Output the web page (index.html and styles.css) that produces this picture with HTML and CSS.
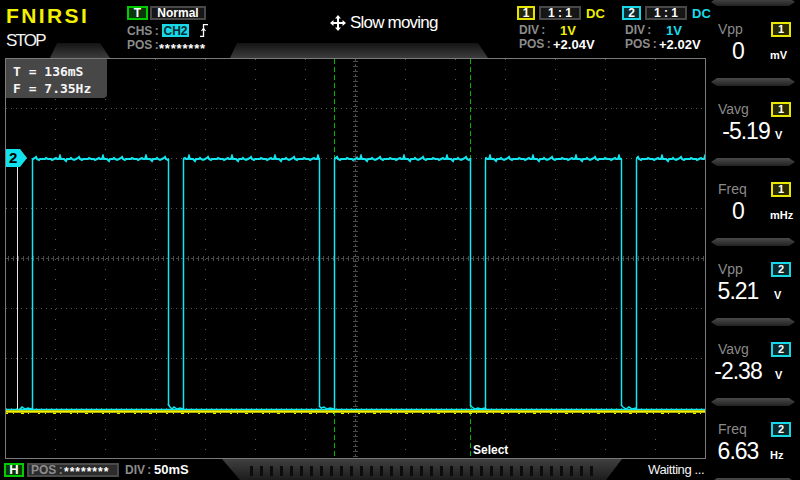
FILE: index.html
```html
<!DOCTYPE html>
<html>
<head>
<meta charset="utf-8">
<link rel="stylesheet" href="styles.css">
</head>
<body>
<div class="app">
  <div class="main">
    <header class="top">
      <div class="deco deco-a"></div>
      <div class="deco deco-b"></div>
      <div class="brand">
        <div class="logo">FNIRSI</div>
        <div class="state">STOP</div>
      </div>
      <div class="trig">
        <div class="row r1"><span class="tag tag-green">T</span><span class="box box-mode">Normal</span></div>
        <div class="row r2"><span class="lbl lbl-chs">CHS :</span><span class="chs">CH2</span>
          <svg class="edge" width="8" height="13" viewBox="0 0 8 13"><path d="M0 12.5H3.5V0.5H8" fill="none" stroke="#fff" stroke-width="1.3"/><path d="M1.5 7L3.5 4.5L5.5 7" fill="none" stroke="#fff" stroke-width="1.2"/></svg>
        </div>
        <div class="row r3"><span class="lbl lbl-pos">POS :</span><span class="stars">********</span></div>
      </div>
      <div class="mode">
        <svg class="move" width="16" height="16" viewBox="0 0 16 16"><path d="M8 1V15M1 8H15" stroke="#fff" stroke-width="2"/><path d="M8 0L11 3.5H5Z M8 16L11 12.5H5Z M0 8L3.5 5V11Z M16 8L12.5 5V11Z" fill="#fff"/></svg>
        <span>Slow moving</span>
      </div>
      <div class="ch ch1">
        <div class="row r1"><span class="tag tag-y">1</span><span class="box box-ratio">1 : 1</span><span class="dc yel">DC</span></div>
        <div class="row r2"><span class="lbl lbl-div">DIV :</span><span class="dv yel">1V</span></div>
        <div class="row r3"><span class="lbl lbl-pos2">POS :</span><span class="pv">+2.04V</span></div>
      </div>
      <div class="ch ch2">
        <div class="row r1"><span class="tag tag-c">2</span><span class="box box-ratio">1 : 1</span><span class="dc cya">DC</span></div>
        <div class="row r2"><span class="lbl lbl-div">DIV :</span><span class="dv cya">1V</span></div>
        <div class="row r3"><span class="lbl lbl-pos2">POS :</span><span class="pv">+2.02V</span></div>
      </div>
    </header>

    <div class="scope">
      <svg class="screen" width="699" height="399" viewBox="6 59 699 399">
        <defs>
          <pattern id="cnoise" patternUnits="userSpaceOnUse" x="0" y="154" width="43" height="10">
            <polyline points="0,5 2,5 3,4 5,5 8,5 9,6 11,5 13,4 14,5 16,5 17,2 18,5 21,5 22,6 23,7 24,5 27,5 28,4 29,5 31,6 33,5 35,4 36,3 37,5 39,6 40,5 43,5" fill="none" stroke="#12e6f0" stroke-width="2"/>
          </pattern>
        </defs>
        <g class="grid" stroke="#5a5a5a" stroke-width="1" stroke-dasharray="1 9">
          <line x1="55.5" y1="59" x2="55.5" y2="458"/>
          <line x1="105.5" y1="59" x2="105.5" y2="458"/>
          <line x1="155.5" y1="59" x2="155.5" y2="458"/>
          <line x1="205.5" y1="59" x2="205.5" y2="458"/>
          <line x1="255.5" y1="59" x2="255.5" y2="458"/>
          <line x1="305.5" y1="59" x2="305.5" y2="458"/>
          <line x1="405.5" y1="59" x2="405.5" y2="458"/>
          <line x1="455.5" y1="59" x2="455.5" y2="458"/>
          <line x1="505.5" y1="59" x2="505.5" y2="458"/>
          <line x1="555.5" y1="59" x2="555.5" y2="458"/>
          <line x1="605.5" y1="59" x2="605.5" y2="458"/>
          <line x1="655.5" y1="59" x2="655.5" y2="458"/>
        </g>
        <g class="grid" stroke="#5a5a5a" stroke-width="1" stroke-dasharray="1 4">
          <line x1="6" y1="108.5" x2="705" y2="108.5"/>
          <line x1="6" y1="158.5" x2="705" y2="158.5"/>
          <line x1="6" y1="208.5" x2="705" y2="208.5"/>
          <line x1="6" y1="308.5" x2="705" y2="308.5"/>
          <line x1="6" y1="358.5" x2="705" y2="358.5"/>
          <line x1="6" y1="408.5" x2="705" y2="408.5"/>
        </g>
        <g class="cross" stroke="#4a4a4a">
          <line x1="355.5" y1="59" x2="355.5" y2="458" stroke-width="1" stroke-dasharray="3 2"/>
          <line x1="355.5" y1="61" x2="355.5" y2="458" stroke-width="5" stroke-dasharray="1 4"/>
          <line x1="6" y1="258.5" x2="705" y2="258.5" stroke-width="1" stroke-dasharray="3 2"/>
          <line x1="8" y1="258.5" x2="705" y2="258.5" stroke-width="5" stroke-dasharray="1 4"/>
        </g>
        <g class="cursors" stroke="#00b400" stroke-width="1" stroke-dasharray="5 3">
          <line x1="334.5" y1="59" x2="334.5" y2="458"/>
          <line x1="470.5" y1="59" x2="470.5" y2="458"/>
        </g>
        <line x1="17.5" y1="163" x2="17.5" y2="410" stroke="#e6e6e6" stroke-width="1"/>
        <g class="ch2low" fill="none" stroke="#12e6f0" stroke-width="1.5">
          <line x1="6" y1="409.5" x2="705" y2="409.5"/>
          <polyline points="19,410 22,407 25,409 28,408 31,409 33,408"/>
          <polyline points="168,404 170,407 172,409 174,407 177,409 180,408 183,409"/>
          <polyline points="319,406 321,408 324,407 327,409 330,408 334,409"/>
          <polyline points="470,405 472,407 475,409 478,408 481,409 485,408"/>
          <polyline points="621,405 623,407 626,409 629,407 632,409 636,408"/>
        </g>
        <g class="ch1" stroke="#f2f200">
          <line x1="6" y1="411.5" x2="705" y2="411.5" stroke-width="2.5"/>
          <line x1="6" y1="413.5" x2="705" y2="413.5" stroke-width="1" stroke-dasharray="2 5 1 7 3 4 1 9"/>
        </g>
        <g class="ch2high" fill="url(#cnoise)">
          <rect x="32" y="154" width="137" height="10"/>
          <rect x="183" y="154" width="137" height="10"/>
          <rect x="334" y="154" width="137" height="10"/>
          <rect x="485" y="154" width="137" height="10"/>
          <rect x="636" y="154" width="69" height="10"/>
        </g>
        <g class="edges" stroke="#12e6f0" stroke-width="1.5">
          <line x1="32.5" y1="159" x2="32.5" y2="410"/>
          <line x1="168.5" y1="159" x2="168.5" y2="405"/>
          <line x1="183.5" y1="159" x2="183.5" y2="410"/>
          <line x1="319.5" y1="159" x2="319.5" y2="407"/>
          <line x1="334.5" y1="159" x2="334.5" y2="410"/>
          <line x1="470.5" y1="159" x2="470.5" y2="406"/>
          <line x1="485.5" y1="159" x2="485.5" y2="410"/>
          <line x1="621.5" y1="159" x2="621.5" y2="406"/>
          <line x1="636.5" y1="159" x2="636.5" y2="410"/>
        </g>
      </svg>
      <div class="info">
        <div>T = 136mS</div>
        <div>F = 7.35Hz</div>
      </div>
      <div class="marker">2</div>
      <div class="select">Select</div>
    </div>

    <footer class="bottom">
      <span class="tag tag-h">H</span>
      <span class="hpos"><span class="lbl">POS :</span><span class="stars">********</span></span>
      <span class="hdiv"><span class="lbl">DIV :</span><span class="hv">50mS</span></span>
      <span class="scale"><span class="ticks"></span></span>
      <span class="wait">Waitting ...</span>
    </footer>
  </div>

  <aside class="meas">
    <div class="mblock">
      <div class="sep"></div>
      <div class="mlabel"><span>Vpp</span><span class="badge b1">1</span></div>
      <div class="mval"><span class="num">0</span><span class="unit">mV</span></div>
    </div>
    <div class="mblock">
      <div class="sep"></div>
      <div class="mlabel"><span>Vavg</span><span class="badge b1">1</span></div>
      <div class="mval"><span class="num num-shift">-5.19</span><span class="unit unit-v">V</span></div>
    </div>
    <div class="mblock">
      <div class="sep"></div>
      <div class="mlabel"><span>Freq</span><span class="badge b1">1</span></div>
      <div class="mval"><span class="num">0</span><span class="unit">mHz</span></div>
    </div>
    <div class="mblock">
      <div class="sep"></div>
      <div class="mlabel"><span>Vpp</span><span class="badge b2">2</span></div>
      <div class="mval"><span class="num">5.21</span><span class="unit unit-v2">V</span></div>
    </div>
    <div class="mblock">
      <div class="sep"></div>
      <div class="mlabel"><span>Vavg</span><span class="badge b2">2</span></div>
      <div class="mval"><span class="num">-2.38</span><span class="unit unit-v3">V</span></div>
    </div>
    <div class="mblock">
      <div class="sep"></div>
      <div class="mlabel"><span>Freq</span><span class="badge b2">2</span></div>
      <div class="mval"><span class="num">6.63</span><span class="unit">Hz</span></div>
    </div>
    <div class="sep"></div>
  </aside>
</div>
</body>
</html>
```

FILE: styles.css
```css
* { box-sizing: border-box; }
html, body { margin: 0; padding: 0; background: #000; }
body {
  width: 800px; height: 480px; overflow: hidden;
  font-family: "Liberation Sans", Arial, sans-serif;
  color: #fff;
}
.app { display: grid; grid-template-columns: 706px 94px; height: 480px; }
.main { display: flex; flex-direction: column; }

/* ---------- header ---------- */
.top { position: relative; height: 58px; display: flex; }
.deco {
  position: absolute; top: 43px; height: 15px;
  background: linear-gradient(to bottom, #141414, #3c3c3c);
}
.deco-a { left: 50px; width: 60px; clip-path: polygon(7px 0, 50px 0, 100% 100%, 0 100%); }
.deco-b { left: 230px; width: 258px; clip-path: polygon(7px 0, calc(100% - 10px) 0, 100% 100%, 0 100%); }

.brand { position: relative; width: 127px; padding: 5px 0 0 6px; }
.logo {
  font-weight: bold; font-size: 21px; line-height: 21px;
  color: #f2f200; letter-spacing: 2.4px;
}
.state { margin-top: 6px; font-size: 17px; line-height: 17px; letter-spacing: -1.8px; color: #f4f4f4; }

.row { display: flex; align-items: center; }
.trig { position: relative; width: 193px; padding-top: 6px; }
.trig .r1 { height: 14px; }
.trig .r2 { height: 13px; margin-top: 4px; }
.trig .r3 { height: 12px; margin-top: 2px; }

.tag {
  display: inline-flex; align-items: center; justify-content: center; flex: none;
  border: 2px solid; font-weight: bold; font-size: 12px; line-height: 1; color: #fff;
}
.tag-green { width: 21px; height: 14px; border-color: #00cc00; background: #0b360b; }
.box {
  display: inline-flex; align-items: center; justify-content: center; flex: none;
  border: 2px solid #484848; background: #161616;
  font-weight: bold; font-size: 12px; line-height: 1; color: #fff;
}
.box-mode { width: 56px; height: 14px; margin-left: 2px; }

.lbl {
  flex: none; color: #8c8c8c; font-weight: bold; font-size: 12px; line-height: 1;
  white-space: pre; word-spacing: -1px;
}
.lbl-chs { width: 35px; }
.lbl-pos { width: 32px; }
.chs {
  display: inline-flex; align-items: center; justify-content: center; flex: none;
  width: 27px; height: 13px; background: #16d8e8; color: #062a30;
  font-weight: bold; font-size: 12px; line-height: 1;
}
.edge { margin-left: 11px; }
.stars {
  display: inline-block; font-weight: bold; font-size: 13px; line-height: 1;
  letter-spacing: 0.8px; color: #fff; transform: translateY(3px);
}

.mode {
  position: relative; width: 197px; padding: 14px 0 0 10px;
  display: flex; align-items: flex-start; gap: 4px;
  font-size: 17px; line-height: 17px; letter-spacing: -0.8px;
}
.move { margin-top: 1px; }

.ch { position: relative; padding-top: 6px; }
.ch1 { width: 105px; }
.ch2 { width: 84px; }
.ch .r1 { height: 14px; }
.ch .r2 { height: 12px; margin-top: 4px; }
.ch .r3 { height: 12px; margin-top: 2px; }
.ch1 .r2, .ch1 .r3 { padding-left: 2px; }
.ch2 .r2, .ch2 .r3 { padding-left: 3px; }
.tag-y { width: 18px; height: 14px; border-color: #e4e400; background: #262600; }
.tag-c { width: 19px; height: 14px; border-color: #18d8e8; background: #0c2c30; }
.box-ratio { width: 42px; height: 14px; margin-left: 4px; }
.dc { margin-left: 5px; font-weight: bold; font-size: 13px; line-height: 1; }
.yel { color: #f0f000; }
.cya { color: #18dcec; }
.lbl-div { width: 41px; }
.lbl-pos2 { width: 34px; }
.dv { font-weight: bold; font-size: 13px; line-height: 1; }
.pv { font-weight: bold; font-size: 13px; line-height: 1; color: #fff; }

/* ---------- scope ---------- */
.scope {
  position: relative;
  margin-left: 5px; width: 701px; height: 401px;
  border: 1px solid #7a7a7a;
}
.screen { display: block; }
.info {
  position: absolute; left: 0; top: 0; width: 101px; height: 39px;
  background: #474747; border-bottom-right-radius: 4px;
  padding: 4px 0 0 7px;
  font-family: "DejaVu Sans Mono", "Liberation Mono", monospace;
  font-weight: bold; font-size: 13px; line-height: 17px; color: #f6f6f6;
}
.marker {
  position: absolute; left: 0; top: 90px; width: 21px; height: 18px;
  background: #12e2ee;
  clip-path: polygon(0 0, 14px 0, 100% 50%, 14px 100%, 0 100%);
  color: #000; font-weight: bold; font-size: 15px; line-height: 18px; padding-left: 3px;
}
.select {
  position: absolute; left: 467px; top: 384px;
  font-weight: bold; font-size: 12px; line-height: 14px; color: #fff;
}

/* ---------- footer ---------- */
.bottom { height: 21px; display: flex; align-items: center; padding-left: 4px; }
.tag-h { width: 20px; height: 14px; border-color: #00cc00; background: #0b360b; font-size: 13px; }
.hpos {
  display: inline-flex; align-items: center; margin-left: 3px; flex: none;
  width: 92px; height: 14px; padding-left: 2px;
  background: #2c2c2c; border: 2px solid #4a4a4a;
}
.hpos .lbl { width: 33px; }
.hpos .stars { font-size: 12px; letter-spacing: 1px; transform: translateY(2px); }
.hdiv { display: inline-flex; align-items: center; width: 97px; margin-left: 6px; flex: none; }
.hdiv .lbl { width: 29px; }
.hv { font-weight: bold; font-size: 13px; line-height: 1; }
.scale {
  align-self: stretch; width: 400px; flex: none; display: flex; padding: 7px 22px 4px 28px;
  background: linear-gradient(to bottom, #404040, #1c1c1c);
  clip-path: polygon(0 0, 100% 0, calc(100% - 16px) 100%, 18px 100%);
}
.ticks {
  flex: 1;
  background: repeating-linear-gradient(90deg, #0c0c0c 0 3px, transparent 3px 10px);
}
.wait { margin-left: 26px; font-size: 13px; letter-spacing: -0.4px; color: #f4f4f4; white-space: nowrap; }

/* ---------- measurements ---------- */
.meas { display: flex; flex-direction: column; margin-top: -2px; }
.mblock { height: 80px; flex: none; }
.sep {
  flex: none; height: 8px; margin: 0 5px;
  background: linear-gradient(to bottom, #4a4a4a, #222);
  clip-path: polygon(6px 0, calc(100% - 6px) 0, 100% 50%, calc(100% - 6px) 100%, 6px 100%, 0 50%);
}
.mlabel {
  margin-top: 15px; height: 16px;
  display: flex; align-items: center; justify-content: space-between;
  padding: 0 9px 0 12px;
  color: #8a8a8a; font-size: 14px; line-height: 16px;
}
.badge {
  display: inline-flex; align-items: center; justify-content: center;
  width: 20px; height: 15px; border: 2px solid;
  color: #fff; font-weight: bold; font-size: 11px; line-height: 1;
}
.b1 { border-color: #e8e800; background: #2a2a00; }
.b2 { border-color: #18d8e8; background: #0c2a2e; }
.mval { margin-top: 1px; height: 26px; display: flex; align-items: baseline; }
.num {
  width: 64px; text-align: center; flex: none;
  font-size: 23px; line-height: 26px; letter-spacing: -1px; color: #fff;
}
.num-shift { padding-left: 16px; }
.unit { font-weight: bold; font-size: 11px; line-height: 1; color: #fff; }
.unit-v { margin-left: 5px; }
.unit-v2 { margin-left: 4px; }
.unit-v3 { margin-left: 5px; }
```
